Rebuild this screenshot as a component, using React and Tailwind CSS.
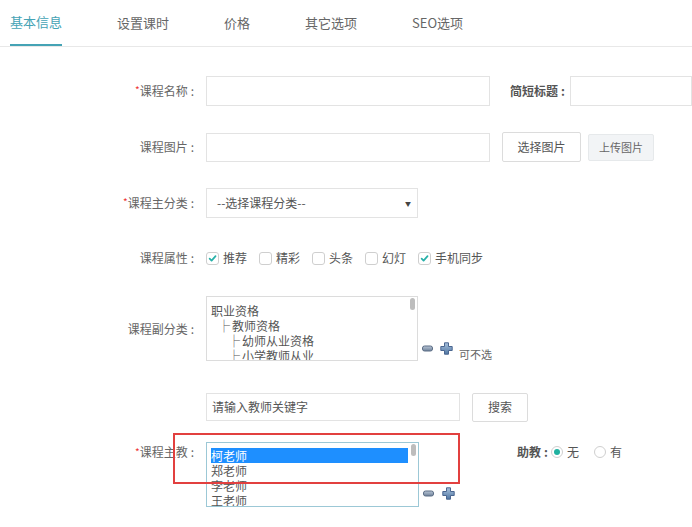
import React from 'react';

const FONT = { fontFamily: '"Microsoft YaHei", "Noto Sans CJK SC", "Noto Sans", sans-serif' };

const tabs = ['基本信息', '设置课时', '价格', '其它选项', 'SEO选项'];

const MinusIcon = () => (
  <svg width="11" height="7" viewBox="0 0 11 7">
    <defs>
      <linearGradient id="mg" x1="0" y1="0" x2="0" y2="1">
        <stop offset="0" stopColor="#b9c6d6" />
        <stop offset="1" stopColor="#6e819a" />
      </linearGradient>
    </defs>
    <rect x="0.5" y="1" width="10" height="5" rx="2" fill="url(#mg)" stroke="#5b6d85" strokeWidth="1" />
  </svg>
);

const PlusIcon = () => (
  <svg width="13" height="13" viewBox="0 0 13 13">
    <defs>
      <linearGradient id="pg" x1="0" y1="0" x2="0" y2="1">
        <stop offset="0" stopColor="#a9c2dd" />
        <stop offset="1" stopColor="#4f76a3" />
      </linearGradient>
    </defs>
    <path
      d="M4.5 0.8 H8.5 V4.5 H12.2 V8.5 H8.5 V12.2 H4.5 V8.5 H0.8 V4.5 H4.5 Z"
      fill="url(#pg)"
      stroke="#4a6690"
      strokeWidth="1"
      strokeLinejoin="round"
    />
  </svg>
);

const Checkbox = ({ checked, label }) => (
  <label className="flex items-center mr-[12px]">
    <span className="w-[13px] h-[13px] border border-[#cfcfcf] rounded-[3px] bg-white flex items-center justify-center">
      {checked && (
        <svg width="9" height="9" viewBox="0 0 10 10">
          <path d="M1.8 5.2 L4 7.4 L8.4 2.4" fill="none" stroke="#26b0a8" strokeWidth="1.9" strokeLinecap="round" strokeLinejoin="round" />
        </svg>
      )}
    </span>
    <span className="ml-[4px] text-[12px] text-[#555]">{label}</span>
  </label>
);

const Radio = ({ checked, label }) => (
  <label className="flex items-center mr-[15px]">
    <span className="w-[12px] h-[12px] rounded-full border border-[#cfcfcf] bg-white flex items-center justify-center">
      {checked && <span className="w-[6px] h-[6px] rounded-full bg-[#1fb1a0]" />}
    </span>
    <span className="ml-[4px] text-[12px] text-[#555]">{label}</span>
  </label>
);

const Label = ({ required, children, className = '' }) => (
  <div className={`w-[200px] shrink-0 text-right text-[12px] text-[#666] ${className}`}>
    {required && <span className="text-[#e33] text-[10px] align-top">*</span>}
    {children}
    <span className="ml-[3px] mr-[6px]">:</span>
  </div>
);

const Branch = () => (
  <span className="inline-block w-[12px] mr-[2px] text-[12px] text-[#555]">├</span>
);

const Scrollbar = () => (
  <div className="absolute right-[2px] top-[1px] w-[5px] h-[12px] rounded-[3px] bg-[#bdbdbd]" />
);

export default function App() {
  return (
    <div className="relative w-[692px] h-[527px] overflow-hidden bg-white" style={FONT}>
      {/* tabs */}
      <div className="h-[47px] border-b border-[#e8e8e8] flex pl-[10px] gap-[55px]">
        {tabs.map((t, i) => (
          <div
            key={t}
            className={`h-[46px] flex items-center text-[13px] ${
              i === 0 ? 'text-[#45a3b5] border-b-2 border-[#45a3b5] -mb-[1px]' : 'text-[#666]'
            }`}
          >
            {t}
          </div>
        ))}
      </div>

      {/* 课程名称 */}
      <div className="flex items-center mt-[29px] h-[30px]">
        <Label required>课程名称</Label>
        <div className="ml-[6px] w-[284px] h-[30px] border border-[#e3e3e3]" />
        <div className="ml-[20px] text-[12px] font-bold text-[#555] w-[60px]">
          简短标题<span className="ml-[3px]">:</span>
        </div>
        <div className="w-[122px] h-[30px] border border-[#e3e3e3]" />
      </div>

      {/* 课程图片 */}
      <div className="flex items-center mt-[26px] h-[30px]">
        <Label>课程图片</Label>
        <div className="ml-[6px] w-[284px] h-[29px] border border-[#e3e3e3]" />
        <button className="ml-[12px] w-[79px] h-[30px] border border-[#dcdcdc] rounded-[2px] bg-white text-[12px] text-[#555]">
          选择图片
        </button>
        <button className="ml-[7px] w-[66px] h-[27px] border border-[#e6e9eb] rounded-[2px] bg-[#f2f4f6] text-[11px] text-[#666]">
          上传图片
        </button>
      </div>

      {/* 课程主分类 */}
      <div className="flex items-center mt-[26px] h-[30px]">
        <Label required>课程主分类</Label>
        <div className="ml-[6px] w-[212px] h-[30px] border border-[#e3e3e3] flex items-center justify-between pl-[10px] pr-[6px]">
          <span className="text-[12px] text-[#555]">--选择课程分类--</span>
          <span className="text-[6px] text-[#444]">▼</span>
        </div>
      </div>

      {/* 课程属性 */}
      <div className="flex items-center mt-[25px] h-[30px]">
        <Label>课程属性</Label>
        <div className="ml-[6px] flex items-center">
          <Checkbox checked label="推荐" />
          <Checkbox label="精彩" />
          <Checkbox label="头条" />
          <Checkbox label="幻灯" />
          <Checkbox checked label="手机同步" />
        </div>
      </div>

      {/* 课程副分类 */}
      <div className="flex items-center mt-[23px]">
        <Label>课程副分类</Label>
        <div className="ml-[6px] relative w-[212px] h-[65px] border border-[#dcdcdc] overflow-hidden pl-[4px] pt-[6px] text-[12px] leading-[15px] text-[#555]">
          <div>职业资格</div>
          <div className="pl-[7px] whitespace-nowrap"><Branch />教师资格</div>
          <div className="pl-[17px] whitespace-nowrap"><Branch />幼师从业资格</div>
          <div className="pl-[17px] whitespace-nowrap"><Branch />小学教师从业</div>
          <Scrollbar />
        </div>
        <div className="self-end flex items-center mb-[6px]">
          <span className="ml-[4px] flex"><MinusIcon /></span>
          <span className="ml-[7px] flex"><PlusIcon /></span>
        </div>
        <span className="self-end ml-[6px] mb-[-1px] text-[11px] text-[#666]">可不选</span>
      </div>

      {/* 教师关键字 */}
      <div className="flex items-center mt-[32px] h-[28px]">
        <div className="w-[200px] shrink-0" />
        <div className="ml-[6px] w-[254px] h-[28px] border border-[#e3e3e3] flex items-center pl-[5px] text-[12px] text-[#555]">
          请输入教师关键字
        </div>
        <button className="ml-[12px] w-[56px] h-[29px] border border-[#dcdcdc] rounded-[2px] bg-white text-[12px] text-[#555]">
          搜索
        </button>
      </div>

      {/* 课程主教 */}
      <div className="relative flex mt-[21px]">
        <Label required className="h-[20px] leading-[20px]">课程主教</Label>
        <div className="ml-[6px] relative w-[213px] h-[65px] border border-[#9cc8d6] overflow-hidden pl-[4px] pt-[5px] text-[12px] leading-[15px] text-[#555]">
          <div className="w-[197px] bg-[#1e8fff] text-white">柯老师</div>
          <div>郑老师</div>
          <div>李老师</div>
          <div>王老师</div>
          <Scrollbar />
        </div>
        <div className="self-end flex items-center mb-[7px]">
          <span className="ml-[4px] flex"><MinusIcon /></span>
          <span className="ml-[8px] flex"><PlusIcon /></span>
        </div>
        <div className="ml-[62px] h-[20px] flex items-center">
          <span className="text-[12px] font-bold text-[#555] mr-[3px]">
            助教<span className="ml-[3px]">:</span>
          </span>
          <Radio checked label="无" />
          <Radio label="有" />
        </div>
        {/* annotation box */}
        <div className="absolute left-[173px] top-[-9px] w-[287px] h-[51px] border-2 border-[#e2403f] pointer-events-none" />
      </div>
    </div>
  );
}
